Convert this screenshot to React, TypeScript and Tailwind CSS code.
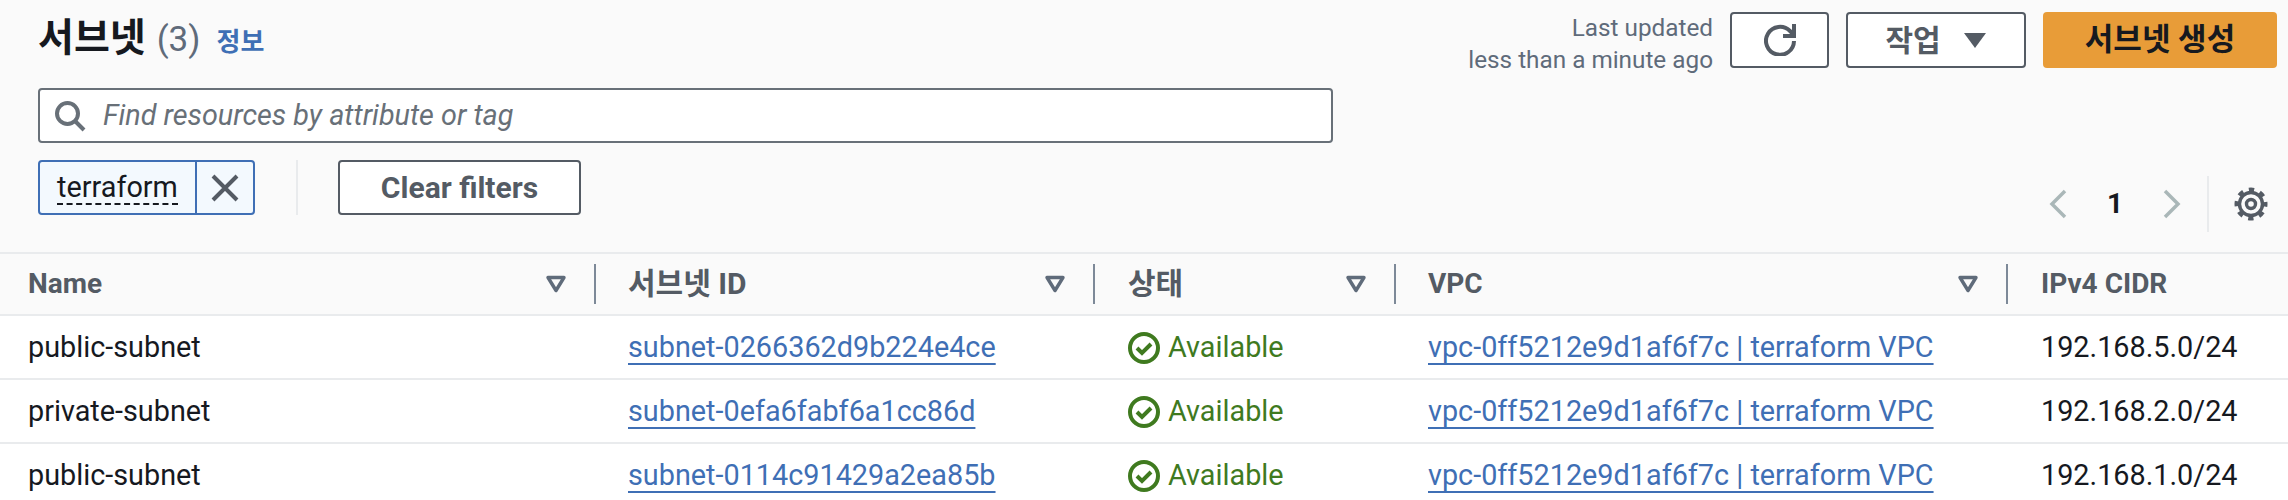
const rows = [
  { name: 'public-subnet', id: 'subnet-0266362d9b224e4ce', cidr: '192.168.5.0/24' },
  { name: 'private-subnet', id: 'subnet-0efa6fabf6a1cc86d', cidr: '192.168.2.0/24' },
  { name: 'public-subnet', id: 'subnet-0114c91429a2ea85b', cidr: '192.168.1.0/24' },
];

const fontStack = "font-['Roboto','Noto_Sans_CJK_KR',sans-serif]";

function SortIcon() {
  return (
    <svg width="22" height="18" viewBox="0 0 22 18" className="shrink-0">
      <path d="M3 2.5h16l-8 13z" fill="none" stroke="#5f6b7a" strokeWidth="3.4" strokeLinejoin="round" />
    </svg>
  );
}

function SearchIcon() {
  return (
    <svg width="32" height="32" viewBox="0 0 32 32" fill="none" stroke="#687078" strokeWidth="4" className="shrink-0">
      <circle cx="13.5" cy="13.5" r="10.5" />
      <path d="M21 21l9 9" />
    </svg>
  );
}

function RefreshIcon() {
  return (
    <svg width="32" height="32" viewBox="0 0 32 32" fill="none" stroke="#545b64" strokeWidth="4">
      <path d="M30 17a14 14 0 1 1-4-10l4 4" />
      <path d="M30 0v12H19" />
    </svg>
  );
}

function CheckIcon() {
  return (
    <svg width="32" height="32" viewBox="0 0 32 32" fill="none" stroke="#3f7a1f" strokeWidth="4" className="shrink-0">
      <circle cx="16" cy="16" r="14" />
      <path d="M9 16l5 5 9-9" />
    </svg>
  );
}

function GearIcon() {
  return (
    <svg width="34" height="34" viewBox="0 0 34 34" fill="none" stroke="#545b64">
      <circle cx="17" cy="17" r="11.5" strokeWidth="3.4" />
      <circle cx="17" cy="17" r="14.5" strokeWidth="4" strokeDasharray="5.4 6" strokeDashoffset="2.7" />
      <circle cx="17" cy="17" r="4.5" strokeWidth="3.4" />
    </svg>
  );
}

function HeaderCell({ label, pad, size, last }: { label: string; pad: string; size: string; last?: boolean }) {
  return (
    <div className={`flex items-center h-10 ${pad} ${last ? '' : 'border-r-2 border-[#7d8998] pr-[27px]'}`}>
      <span className={`${size} font-bold text-[#545b64] flex-1 leading-none`}>{label}</span>
      {!last && <SortIcon />}
    </div>
  );
}

function Row({ name, id, cidr }: { name: string; id: string; cidr: string }) {
  return (
    <div className="grid grid-cols-[596px_499px_301px_612px_280px] items-center h-[64px] pt-[2px] border-t-2 border-[#e9ebed] bg-white text-[28.8px] text-[#16191f]">
      <div className="pl-[28px]">{name}</div>
      <div className="pl-[32px]">
        <a className="text-[#3f6fb5] underline decoration-2 underline-offset-[6px]">{id}</a>
      </div>
      <div className="pl-[33px] flex items-center gap-[8px] text-[#3f7a1f]">
        <CheckIcon />
        <span>Available</span>
      </div>
      <div className="pl-[32px]">
        <a className="text-[#3f6fb5] underline decoration-2 underline-offset-[6px]">vpc-0ff5212e9d1af6f7c | terraform VPC</a>
      </div>
      <div className="pl-[33px]">{cidr}</div>
    </div>
  );
}

export default function App() {
  return (
    <div className={`w-[2288px] h-[500px] overflow-hidden bg-[#fafafa] ${fontStack}`}>
      <div className="h-[252px] flex flex-col">
        {/* 상단 헤더 */}
        <div className="flex justify-between items-start pl-[38px] pr-[11px] pt-[12px]">
          <div className="flex items-baseline leading-[52px]">
            <h1 className="text-[39px] font-bold text-[#16191f]">서브넷</h1>
            <span className="ml-[11px] text-[35px] text-[#5f6b7a]">(3)</span>
            <a className="ml-[16px] text-[26px] font-bold text-[#3f6fb5]">정보</a>
          </div>
          <div className="flex items-start">
            <div className="text-right text-[24.3px] leading-[32px] text-[#5f6b7a] mr-[17px]">
              <div>Last updated</div>
              <div>less than a minute ago</div>
            </div>
            <button className="w-[99px] h-[56px] border-2 border-[#545b64] rounded-[4px] bg-white flex items-center justify-center">
              <RefreshIcon />
            </button>
            <button className="ml-[17px] w-[180px] h-[56px] border-2 border-[#545b64] rounded-[4px] bg-white flex items-center justify-center gap-[22px] text-[30px] font-bold text-[#545b64]">
              작업
              <svg width="24" height="17" viewBox="0 0 24 17">
                <path d="M1 1h22L12 16z" fill="#545b64" />
              </svg>
            </button>
            <button className="ml-[17px] w-[234px] h-[56px] rounded-[4px] bg-[#e89c38] text-[31px] font-bold text-[#16191f]">
              서브넷 생성
            </button>
          </div>
        </div>

        {/* 검색 */}
        <div className="ml-[38px] mt-[12px] w-[1295px] h-[55px] border-2 border-[#687078] rounded-[4px] bg-white flex items-center pl-[14px] gap-[17px]">
          <SearchIcon />
          <span className="text-[28.8px] italic text-[#687078]">Find resources by attribute or tag</span>
        </div>

        {/* 필터 */}
        <div className="flex justify-between mt-[17px] pl-[38px] pr-[20px]">
          <div className="flex items-stretch h-[55px]">
            <div className="flex w-[217px] border-2 border-[#3f6fb5] rounded-[4px] bg-[#f3f9fe]">
              <div className="w-[155px] flex items-center justify-center">
                <span className="text-[28.8px] text-[#16191f] border-b-2 border-dashed border-[#16191f] leading-[32px]">terraform</span>
              </div>
              <div className="flex-1 border-l-2 border-[#3f6fb5] flex items-center justify-center">
                <svg width="30" height="30" viewBox="0 0 30 30" fill="none" stroke="#545b64" strokeWidth="4">
                  <path d="M3 3l24 24M27 3L3 27" />
                </svg>
              </div>
            </div>
            <div className="w-[2px] bg-[#e9ebed] ml-[41px]" />
            <button className="ml-[40px] w-[243px] border-2 border-[#545b64] rounded-[4px] bg-white text-[30px] font-bold text-[#545b64]">
              Clear filters
            </button>
          </div>
          <div className="flex items-center h-[56px] mt-[16px]">
            <svg width="18" height="30" viewBox="0 0 18 30" fill="none" stroke="#aab7b8" strokeWidth="3.5">
              <path d="M16 2L3 15l13 13" />
            </svg>
            <span className="mx-[40px] text-[28px] font-bold text-[#16191f]">1</span>
            <svg width="18" height="30" viewBox="0 0 18 30" fill="none" stroke="#aab7b8" strokeWidth="3.5">
              <path d="M2 2l13 13L2 28" />
            </svg>
            <div className="w-[2px] h-[56px] bg-[#e9ebed] ml-[26px] mr-[25px]" />
            <GearIcon />
          </div>
        </div>
      </div>

      {/* 테이블 */}
      <div className="border-t-2 border-[#e9ebed]">
        <div className="grid grid-cols-[596px_499px_301px_612px_280px] items-center h-[60px]">
          <HeaderCell label="Name" pad="pl-[28px]" size="text-[28px]" />
          <HeaderCell label="서브넷 ID" pad="pl-[32px]" size="text-[30px]" />
          <HeaderCell label="상태" pad="pl-[33px]" size="text-[30px]" />
          <HeaderCell label="VPC" pad="pl-[32px]" size="text-[28px]" />
          <HeaderCell label="IPv4 CIDR" pad="pl-[33px]" size="text-[28px]" last />
        </div>
        {rows.map((r) => (
          <Row key={r.id} {...r} />
        ))}
      </div>
    </div>
  );
}
